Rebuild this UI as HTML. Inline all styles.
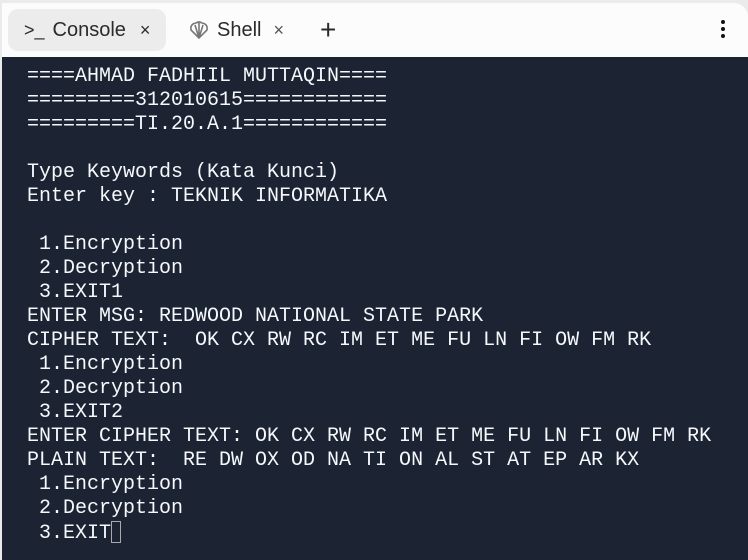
<!DOCTYPE html>
<html><head><style>
body{margin:0;width:748px;height:560px;background:#ebebeb;overflow:hidden;position:relative;font-family:"Liberation Sans",sans-serif}
.top{position:absolute;left:2px;top:3px;width:746px;height:54px;background:#fcfcfc;border-radius:0 14px 0 0}
.tab{position:absolute;top:6px;height:42px;display:flex;align-items:center;font-size:20px;color:#2b2b2b}
.t1{left:6px;width:158px;background:#ececec;border-radius:10px}
.term{position:absolute;left:2px;top:57px;width:746px;height:503px;background:#1c2333}
pre{margin:0;position:absolute;left:25px;top:8px;font-family:"Liberation Mono",monospace;font-size:20px;line-height:24px;color:#f5f9fc}
.cur{display:inline-block;width:10px;height:22px;border:1.5px solid #aaa;vertical-align:-5px;box-sizing:border-box}
</style></head><body>
<div class="top">
<div class="tab t1"><span style="margin-left:16px;font-size:18px">&gt;_</span><span style="margin-left:8px">Console</span><span style="margin-left:14px;font-size:18px">×</span></div>
<div class="tab" style="left:186px"><svg width="22" height="20" viewBox="0 0 22 20"><path d="M11 18 L3 10 Q2 4 8 3 Q11 1 14 3 Q20 4 19 10 Z M11 18 L7 5 M11 18 L11 3 M11 18 L15 5" fill="none" stroke="#777" stroke-width="1.6"/></svg><span style="margin-left:7px">Shell</span><span style="margin-left:12px;font-size:18px;color:#555">×</span></div>
<div class="tab" style="left:318px;font-size:28px;font-weight:300">+</div>
<div style="position:absolute;left:719px;top:17px;width:4px">
<div style="width:4px;height:4px;background:#111;border-radius:50%;margin-bottom:3px"></div><div style="width:4px;height:4px;background:#111;border-radius:50%;margin-bottom:3px"></div><div style="width:4px;height:4px;background:#111;border-radius:50%"></div></div>
</div>
<div class="term"><pre>====AHMAD FADHIIL MUTTAQIN====
=========312010615============
=========TI.20.A.1============

Type Keywords (Kata Kunci)
Enter key : TEKNIK INFORMATIKA

 1.Encryption
 2.Decryption
 3.EXIT1
ENTER MSG: REDWOOD NATIONAL STATE PARK
CIPHER TEXT:  OK CX RW RC IM ET ME FU LN FI OW FM RK
 1.Encryption
 2.Decryption
 3.EXIT2
ENTER CIPHER TEXT: OK CX RW RC IM ET ME FU LN FI OW FM RK
PLAIN TEXT:  RE DW OX OD NA TI ON AL ST AT EP AR KX
 1.Encryption
 2.Decryption
 3.EXIT<span class="cur"></span></pre></div>
</body></html>
